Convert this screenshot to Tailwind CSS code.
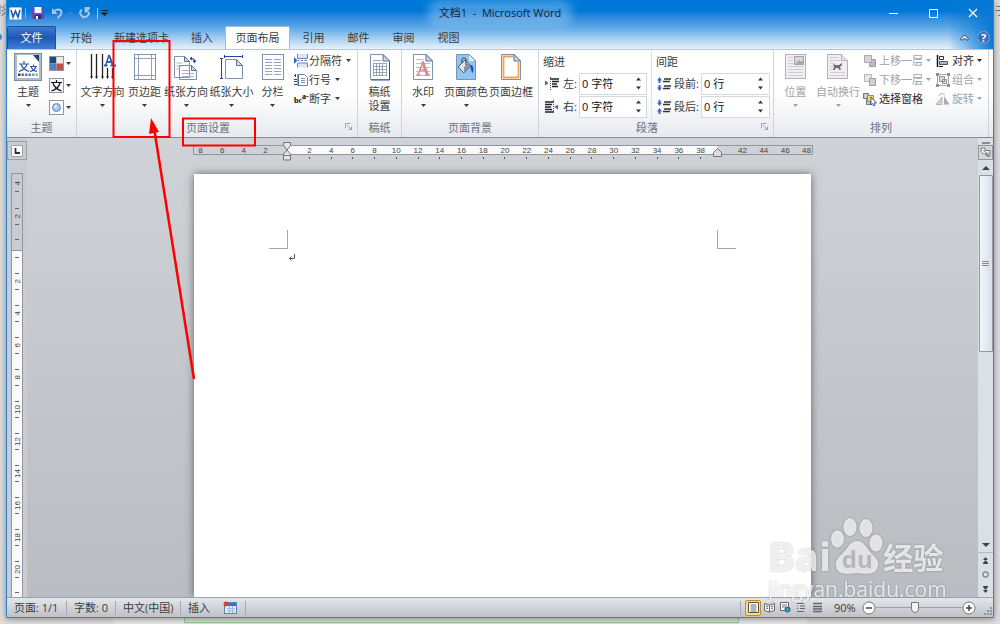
<!DOCTYPE html>
<html lang="zh-CN">
	<head>
		<meta charset="UTF-8" />
		<meta name="viewport" content="width=device-width, initial-scale=1.0" />
		<title>文档1 - Microsoft Word</title>
		<script src="https://cdn.jsdelivr.net/npm/@tailwindcss/browser@4"></script>
	</head>
	<body class="relative h-screen overflow-hidden bg-[#dcdcdc] font-['Open_Sans','Noto_Sans_CJK_SC',sans-serif] text-[11px] leading-[14px] text-[#3b3b3b]">
		<!-- Shared symbols -->
		<svg class="hidden">
			<defs>
				<linearGradient id="paper" x1="0" y1="0" x2="1" y2="1">
					<stop offset="0" stop-color="#fff" />
					<stop offset="1" stop-color="#cbdaee" />
				</linearGradient>
			</defs>
			<symbol id="arrow" viewBox="0 0 5 3"><path d="M0 0h5L2.500 3z" fill="currentColor" /></symbol>
			<symbol id="sheet" viewBox="0 0 22 28">
				<path d="M1.500 1.500h12.500l6.500 6.500v18.500h-19z" fill="url(#paper)" stroke="#7f93ad" />
				<path d="M14 1.500v6.500h6.500z" fill="#c9d8ea" stroke="#5b7391" />
			</symbol>
			<symbol id="launcher" viewBox="0 0 8 8"><path d="M.5 6V.5H6M3 3l4 4M7.500 4v3.500H4" fill="none" stroke="#8b929c" /></symbol>
		</svg>

		<!-- Window behind -->
		<div class="absolute inset-x-0 bottom-0 flex h-[6px] pl-[114px]">
			<div class="w-[70px] bg-[#e6e6e6]"></div>
			<div class="h-[5px] w-[555px] border border-t-0 border-[#9cc79a] bg-[#d4e3d0]"></div>
			<div class="w-[68px] bg-[#e6e6e6]"></div>
		</div>
		<div class="absolute top-[4px] right-0 w-[5px] overflow-hidden text-[#555]">子</div>
		<div class="absolute top-[4px] left-0 flex w-[6px] justify-end overflow-hidden text-[#777]">彩</div>
		<div class="absolute top-[34px] -left-[3px] h-[6px] w-[5px] rounded-full border-2 border-[#4a8be0]"></div>

		<div class="relative mx-[6px] flex h-[calc(100vh-6px)] flex-col border border-t-0 border-[#2a86d3] bg-[#c9cdd2] shadow-[0_1px_6px_rgba(0,0,0,0.4)]">
			<header class="relative bg-linear-to-b from-[#0078d7] from-24% via-[#5aa8e6] via-56% to-[#e8f2fb]">
				<div class="absolute inset-y-0 right-0 w-[45px] bg-linear-to-r from-transparent to-[#0a78d2]"></div>
				<!-- Title bar -->
				<div class="relative flex h-[26px] items-center">
					<div class="flex flex-1 items-center">
						<svg class="ml-[2px] size-[13px]" viewBox="0 0 13 13">
							<rect x=".5" y=".5" width="12" height="12" rx="1" fill="#fff" stroke="#9cc5ea" />
							<path d="M2 3l2 7 2.500-6 2.500 6 2-7" fill="none" stroke="#1d5cae" stroke-width="1.600" />
						</svg>
						<span class="ml-[3px] h-[11px] w-px bg-[#7ab2e4]"></span>
						<button class="ml-[6px]" aria-label="保存">
							<svg class="size-[12px]" viewBox="0 0 12 12">
								<path d="M0 0h12v12H1L0 11z" fill="#5a4bb5" />
								<path d="M2.500 0h7v6h-7z" fill="#f3f3fb" />
								<path d="M3 8h6v4H3z" fill="#2d2670" />
								<path d="M4 9h2v3H4z" fill="#fff" />
							</svg>
						</button>
						<button class="ml-[8px]" aria-label="撤消">
							<svg class="h-[12px] w-[11px]" viewBox="0 0 11 12">
								<path d="M2 4.500C5 1.500 9.500 2 9.500 5.500c0 2.500-2 3.500-4 5.500" fill="none" stroke="#a9c6e6" stroke-width="2" />
								<path d="M0 1v6h5.500z" fill="#a9c6e6" />
							</svg>
						</button>
						<svg class="ml-[5px] h-[3px] w-[5px] text-[#4a7fb5]"><use href="#arrow" /></svg>
						<button class="ml-[6px]" aria-label="重复">
							<svg class="size-[12px]" viewBox="0 0 12 12">
								<path d="M3 2.500A4.200 4.200 0 1 0 9.500 4.500" fill="none" stroke="#a9c6e6" stroke-width="2" />
								<path d="M5.500 5.500V0H11v1.500L8 5.500z" fill="#a9c6e6" />
							</svg>
						</button>
						<span class="ml-[6px] h-[11px] w-px bg-[#9fc8ee]"></span>
						<button class="ml-[3px]" aria-label="自定义快速访问工具栏">
							<svg class="h-[6px] w-[7px]" viewBox="0 0 7 6"><path d="M0 0h7v1H0zM0 2.500h7L3.500 6z" fill="#0d2238" /></svg>
						</button>
					</div>
					<h1 class="rounded-full bg-white/25 px-[6px] whitespace-pre text-[#10243a] shadow-[0_0_8px_6px_rgba(255,255,255,0.25)]">文档1  -  Microsoft Word</h1>
					<div class="flex flex-1 justify-end text-white">
						<button class="mr-[30px]" aria-label="最小化"><svg class="size-[10px]" viewBox="0 0 10 10"><path d="M1 5.500h9" stroke="currentColor" /></svg></button>
						<button class="mr-[30px]" aria-label="最大化"><svg class="size-[10px]" viewBox="0 0 10 10"><path d="M1.500 1.500h8v8h-8z" fill="none" stroke="currentColor" /></svg></button>
						<button class="mr-[15px]" aria-label="关闭"><svg class="size-[10px]" viewBox="0 0 10 10"><path d="M1 1l8 8M9 1l-8 8" stroke="currentColor" stroke-width="1.200" /></svg></button>
					</div>
				</div>

				<!-- Tabs -->
				<nav class="relative flex h-[23px] items-stretch">
					<button class="w-[49px] rounded-t-[2px] border border-b-0 border-[#1d4f9f] bg-linear-to-b from-[#3d7bd0] via-[#1f57b2] to-[#3f7fd8] text-white">文件</button>
					<button class="ml-[2px] w-[46px]">开始</button>
					<button class="w-[75px] whitespace-nowrap">新建选项卡</button>
					<button class="w-[46px]">插入</button>
					<button class="w-[65px] rounded-t-[2px] border border-b-0 border-[#a7b9cc] bg-white">页面布局</button>
					<button class="ml-px w-[45px]">引用</button>
					<button class="w-[45px]">邮件</button>
					<button class="w-[45px]">审阅</button>
					<button class="w-[45px]">视图</button>
					<div class="ml-auto flex items-center gap-[8px] pr-[3px]">
						<button aria-label="功能区最小化"><svg class="h-[7px] w-[9px]" viewBox="0 0 9 7"><path d="M1 4.500L4.500 1 8 4.500v1.500H6.500l-2-2-2 2H1z" fill="#fff" stroke="#33414f" /></svg></button>
						<button aria-label="帮助" class="size-[13px] rounded-full border border-[#7fa3da] bg-[#3a6cc0] text-[11px] leading-[11px] font-bold text-white">?</button>
					</div>
				</nav>
			</header>

			<!-- Ribbon -->
			<section class="flex h-[89px] shrink-0 border-t border-b border-t-[#b9c6d4] border-b-[#868b91] bg-linear-to-b from-white from-50% to-[#e6e9ee]">
				<div class="flex w-[70px] flex-col border-r border-[#cfd4da]">
					<div class="flex flex-1">
						<button class="flex w-[42px] flex-col items-center pt-[3px]">
							<svg class="mb-[4px] size-[28px]" viewBox="0 0 28 28">
								<rect x=".5" y=".5" width="27" height="27" fill="#aebccc" stroke="#7d8da0" />
								<path d="M3 2h17l5 5v18H3z" fill="#fff" />
								<path d="M19 2h6v7z" fill="#1f3f77" />
								<path d="M5 11h10M10 8v3M7 11c1 4 4 6 8 7.500M13 11c-1 4-4 6-8 7.500M16 13.500h7M19.500 11.500v2M17 13.500c1 3 3 4.500 6 5M22 13.500c-1 3-3 4.500-6 5" fill="none" stroke="#2e5c9a" stroke-width="1.100" />
								<path d="M4 20.500h2.500v2.500H4z" fill="#27477d" /><path d="M7.500 20.500H10v2.500H7.500z" fill="#c0504d" /><path d="M11 20.500h2.500v2.500H11z" fill="#4f81bd" /><path d="M14.500 20.500H17v2.500h-2.500z" fill="#8064a2" /><path d="M18 20.500h2.500v2.500H18z" fill="#4bacc6" /><path d="M21.500 20.500H24v2.500h-2.500z" fill="#f79646" />
							</svg>
							<span>主题</span>
							<svg class="mt-[5px] h-[3px] w-[5px]"><use href="#arrow" /></svg>
						</button>
						<div class="flex flex-col gap-[7px] pt-[6px]">
							<button class="flex items-center gap-[2px]" aria-label="主题颜色">
								<svg class="size-[15px]" viewBox="0 0 15 15"><rect x=".5" y=".5" width="14" height="14" fill="#fff" stroke="#8c98a6" /><path d="M1 1h6.500v6.500H1z" fill="#1f497d" /><path d="M7.500 1H14v6.500H7.500z" fill="#eeece1" /><path d="M1 7.500h6.500V14H1z" fill="#4f81bd" /><path d="M7.500 7.500H14V14H7.500z" fill="#c0504d" /></svg>
								<svg class="h-[3px] w-[5px]"><use href="#arrow" /></svg>
							</button>
							<button class="flex items-center gap-[2px]" aria-label="主题字体">
								<svg class="size-[15px]" viewBox="0 0 15 15"><rect x=".5" y=".5" width="14" height="14" fill="#f5f7fa" stroke="#8c98a6" /><path d="M2 4.500h11M7.500 2v2.500M4 5c1 4 4 6.500 8.500 8M11 5c-1 4-4 6.500-8.500 8" fill="none" stroke="#111" stroke-width="1.200" /></svg>
								<svg class="h-[3px] w-[5px]"><use href="#arrow" /></svg>
							</button>
							<button class="flex items-center gap-[2px]" aria-label="主题效果">
								<svg class="size-[15px]" viewBox="0 0 15 15"><rect x=".5" y=".5" width="14" height="14" fill="#fff" stroke="#8c98a6" /><circle cx="7.500" cy="7.500" r="4" fill="#a9c6f2" stroke="#5e86c9" /><circle cx="6.500" cy="6.500" r="1.500" fill="#e3eefc" /></svg>
								<svg class="h-[3px] w-[5px]"><use href="#arrow" /></svg>
							</button>
						</div>
					</div>
					<div class="h-[16px] text-center text-[#6b727c]">主题</div>
				</div>

				<div class="flex w-[281px] flex-col border-r border-[#cfd4da]">
					<div class="flex flex-1 pl-[3px] whitespace-nowrap">
						<button class="flex w-[45px] flex-col items-center pt-[3px]">
							<svg class="mb-[4px] h-[28px] w-[26px]" viewBox="0 0 26 28">
								<path d="M1.500 1v23M6.500 1v23M12.500 1v23M17.500 15v9M22.500 15v9" stroke="#222" stroke-width="1.300" />
								<path d="M0 23.500h3L1.500 26zM5 23.500h3L6.500 26zM11 23.500h3L12.500 26zM16 23.500h3L17.500 26zM21 23.500h3L22.500 26z" fill="#222" />
								<path d="M15.500 12.500L19 2M19 2l4 10.500" fill="none" stroke="#2f62ae" stroke-width="1.500" />
								<path d="M19 2l4 10.500M17 9h5M14 12.500h3.500M20.500 12.500H26" fill="none" stroke="#2f62ae" stroke-width="1.800" />
							</svg>
							<span>文字方向</span>
							<svg class="mt-[5px] h-[3px] w-[5px]"><use href="#arrow" /></svg>
						</button>
						<button class="flex w-[39px] flex-col items-center pt-[3px]">
							<svg class="mb-[4px] h-[28px] w-[22px]" viewBox="0 0 22 28">
								<rect x=".5" y="1.500" width="21" height="25" fill="url(#paper)" stroke="#7f93ad" />
								<path d="M4.500 2v24M17.500 2v24M1 5.500h20M1 22.500h20" stroke="#8fa2c2" />
							</svg>
							<span>页边距</span>
							<svg class="mt-[5px] h-[3px] w-[5px]"><use href="#arrow" /></svg>
						</button>
						<button class="flex w-[44px] flex-col items-center pt-[3px]">
							<svg class="mb-[4px] h-[28px] w-[26px]" viewBox="0 0 26 28">
								<path d="M1.500 3.500h10l5 5v16h-15z" fill="url(#paper)" stroke="#7f93ad" /><path d="M11.500 3.500v5h5z" fill="#c9d8ea" stroke="#5b7391" />
								<path d="M3.500 10h6M3.500 13h6M3.500 16h3" stroke="#9fb2cb" />
								<path d="M6.500 12.500h12l5 5v9h-17z" fill="url(#paper)" stroke="#7f93ad" /><path d="M18.500 12.500v5h5z" fill="#c9d8ea" stroke="#5b7391" />
								<path d="M9 17.500h7M9 20.500h12M9 23.500h12" stroke="#9fb2cb" />
								<path d="M18.500 5.500c2 0 3 1 3 3" fill="none" stroke="#24468c" stroke-width="1.200" /><path d="M19.500 7.500h4L21.500 10.500zM19 3.500v4L16.500 5.500z" fill="#24468c" />
							</svg>
							<span>纸张方向</span>
							<svg class="mt-[5px] h-[3px] w-[5px]"><use href="#arrow" /></svg>
						</button>
						<button class="flex w-[47px] flex-col items-center pt-[3px]">
							<svg class="mb-[4px] h-[28px] w-[24px]" viewBox="0 0 24 28">
								<path d="M5.500 6.500h11l6 6v13h-17z" fill="url(#paper)" stroke="#7f93ad" /><path d="M16.500 6.500v6h6z" fill="#c9d8ea" stroke="#5b7391" />
								<path d="M4.500 3.500h18M1.500 6v20M4.500 2v3M22.500 2v3M0 5.500h3M0 25.500h3" fill="none" stroke="#2c3e9c" />
							</svg>
							<span>纸张大小</span>
							<svg class="mt-[5px] h-[3px] w-[5px]"><use href="#arrow" /></svg>
						</button>
						<button class="flex w-[35px] flex-col items-center pt-[3px]">
							<svg class="mb-[4px] h-[28px] w-[22px]" viewBox="0 0 22 28">
								<rect x=".5" y="1.500" width="21" height="25" fill="url(#paper)" stroke="#7f93ad" />
								<path d="M3 6.500h7M3 9.500h7M3 12.500h7M3 15.500h7M3 18.500h7M3 21.500h7M12 6.500h7M12 9.500h7M12 12.500h7M12 15.500h7M12 18.500h7M12 21.500h7" stroke="#8ea6c8" />
							</svg>
							<span>分栏</span>
							<svg class="mt-[5px] h-[3px] w-[5px]"><use href="#arrow" /></svg>
						</button>
						<div class="flex flex-col pt-px pl-[4px]">
							<button class="flex h-[19px] items-center gap-px">
								<svg class="h-[14px] w-[14px]" viewBox="0 0 14 14"><path d="M3.500 0v4.500h10V0M3.500 13.500v-4.500h10v4.500" fill="#dbe6f4" stroke="#6c87ad" /><path d="M0 3.500v6l3-3zM4 6.500h1.500M7 6.500h2M10.500 6.500H13" fill="#2d62b3" stroke="#2d62b3" stroke-width=".8" /></svg>
								<span>分隔符</span>
								<svg class="ml-[3px] h-[3px] w-[5px]"><use href="#arrow" /></svg>
							</button>
							<button class="flex h-[19px] items-center gap-px">
								<svg class="h-[14px] w-[14px]" viewBox="0 0 14 14"><path d="M4.500 1.500h6l3 3v8h-9z" fill="url(#paper)" stroke="#6c87ad" /><path d="M7 5.500h4M7 7.500h4M7 9.500h4" stroke="#7d95b8" /><path d="M0 2.500h2M1.500 1v3M0 6.500h3M0 8.500h3M0 11.500h3M4 1v12" stroke="#2b4d85" /></svg>
								<span>行号</span>
								<svg class="ml-[3px] h-[3px] w-[5px]"><use href="#arrow" /></svg>
							</button>
							<button class="flex h-[19px] items-center gap-px">
								<span class="flex w-[14px] font-['Liberation_Serif',serif] text-[8px] leading-[8px] font-bold text-black"><span class="pt-[4px]">bc</span><span>a-</span></span>
								<span>断字</span>
								<svg class="ml-[3px] h-[3px] w-[5px]"><use href="#arrow" /></svg>
							</button>
						</div>
					</div>
					<div class="flex h-[16px] text-[#6b727c]">
						<span class="flex-1 text-center">页面设置</span>
						<button class="w-[18px] pb-[6px] pl-[6px]" aria-label="页面设置对话框"><svg class="size-[7px]"><use href="#launcher" /></svg></button>
					</div>
				</div>

				<div class="flex w-[44px] flex-col border-r border-[#cfd4da]">
					<button class="flex flex-1 flex-col items-center pt-[3px]">
						<svg class="mb-[4px] h-[28px] w-[22px]" viewBox="0 0 22 28">
							<use href="#sheet" />
							<path d="M4 10.500h14M4 13.500h14M4 16.500h14M4 19.500h14M4 22.500h14M4.500 10v13M7.500 10v13M10.500 10v13M13.500 10v13M17.500 10v13M4 7.500h8" stroke="#8893a3" stroke-width=".8" />
							<path d="M20.500 9v18H2" fill="none" stroke="#2f5597" />
						</svg>
						<span class="w-[22px]">稿纸设置</span>
					</button>
					<div class="h-[16px] text-center text-[#6b727c]">稿纸</div>
				</div>

				<div class="flex w-[137px] flex-col border-r border-[#cfd4da]">
					<div class="flex flex-1 whitespace-nowrap">
						<button class="flex w-[42px] flex-col items-center pt-[3px]">
							<svg class="mb-[4px] h-[28px] w-[22px]" viewBox="0 0 22 28">
								<use href="#sheet" />
								<path d="M4 6.500h8M4 10.500h14M4 14.500h14M4 18.500h14M4 22.500h14" stroke="#b5c2d3" />
								<path d="M6 21.500L11 9M8 17h6.500M4.500 22h4M13 22h5" fill="none" stroke="#d98a86" stroke-width="1.400" />
								<path d="M10.500 8.500l5 13.500" stroke="#d98a86" stroke-width="2.800" />
							</svg>
							<span>水印</span>
							<svg class="mt-[5px] h-[3px] w-[5px]"><use href="#arrow" /></svg>
						</button>
						<button class="flex w-[44px] flex-col items-center pt-[3px]">
							<svg class="mb-[4px] h-[28px] w-[22px]" viewBox="0 0 22 28">
								<use href="#sheet" />
								<path d="M2 2h12v6h6v18H2z" fill="#8ec5f5" /><path d="M14 2v6h6z" fill="#e4effa" />
								<path d="M3 14l7-7 6 6-7 7z" fill="#dfe5ec" stroke="#4d5a68" /><path d="M9 14l4-4 3 3-7 7z" fill="#8794a3" /><path d="M7 10V6.500c0-2 4-2 4 0V12" fill="none" stroke="#333" />
								<path d="M15 12c3 0 4 2 3 8-2-1-2-4-3-8z" fill="#1f4fa8" />
							</svg>
							<span>页面颜色</span>
							<svg class="mt-[5px] h-[3px] w-[5px]"><use href="#arrow" /></svg>
						</button>
						<button class="flex w-[46px] flex-col items-center pt-[3px]">
							<svg class="mb-[4px] h-[28px] w-[22px]" viewBox="0 0 22 28">
								<use href="#sheet" />
								<path d="M13.500 3.500h-10v21h15V9" fill="none" stroke="#eda25a" stroke-width="1.800" />
							</svg>
							<span>页面边框</span>
						</button>
					</div>
					<div class="h-[16px] text-center text-[#6b727c]">页面背景</div>
				</div>

				<div class="flex w-[235px] flex-col border-r border-[#cfd4da]">
					<div class="flex flex-1 pl-[4px]">
						<div class="w-[109px] border-r border-[#dfe3e8] pt-[5px]">
							<div class="mb-[3px]">缩进</div>
							<div class="flex h-[23px] items-center">
								<svg class="ml-[2px] h-[14px] w-[15px]" viewBox="0 0 15 14"><path d="M5 2h9M7 4.500h7M7 7h5M7 9.500h6" stroke="#222" stroke-width="1.500" /><path d="M5.500 0v14" stroke="#555" stroke-dasharray="1 1" /><path d="M0 3.500v5L3.500 6z" fill="#3a66c4" /></svg>
								<label for="indent-left" class="w-[19px] pl-[3px]">左:</label>
								<div class="flex h-[22px] w-[68px] shrink-0 items-center border border-[#d5d9de] bg-white">
									<input id="indent-left" class="w-[50px] pl-[2px] text-[#111] outline-none" value="0 字符" />
									<svg class="ml-[6px] h-[13px] w-[5px]" viewBox="0 0 5 13"><path d="M0 3.500h5L2.500.5zM0 9.500h5L2.500 12.500z" fill="#333" /></svg>
								</div>
							</div>
							<div class="flex h-[23px] items-center">
								<svg class="ml-[2px] h-[14px] w-[15px]" viewBox="0 0 15 14"><path d="M0 2h9M0 4.500h7M0 7h6M0 9.500h7M0 12h9" stroke="#222" stroke-width="1.500" /><path d="M8.500 0v14" stroke="#555" stroke-dasharray="1 1" /><path d="M9.500 7L13 4.500v5z" fill="#3a66c4" /></svg>
								<label for="indent-right" class="w-[19px] pl-[3px]">右:</label>
								<div class="flex h-[22px] w-[68px] shrink-0 items-center border border-[#d5d9de] bg-white">
									<input id="indent-right" class="w-[50px] pl-[2px] text-[#111] outline-none" value="0 字符" />
									<svg class="ml-[6px] h-[13px] w-[5px]" viewBox="0 0 5 13"><path d="M0 3.500h5L2.500.5zM0 9.500h5L2.500 12.500z" fill="#333" /></svg>
								</div>
							</div>
						</div>
						<div class="pt-[5px] pl-[4px]">
							<div class="mb-[3px]">间距</div>
							<div class="flex h-[23px] items-center">
								<svg class="ml-px h-[14px] w-[14px]" viewBox="0 0 14 14"><path d="M7 2h7M6 4.500h7M7 9h7M6 11.500h7" stroke="#333" stroke-width="1.400" /><path d="M0 3.500L2.500 0 5 3.500H3.500V6h-2V3.500zM0 10.500L2.500 14 5 10.500H3.500V8h-2v2.500z" fill="#3a66c4" /></svg>
								<label for="space-before" class="w-[30px] pl-[3px] whitespace-nowrap">段前:</label>
								<div class="flex h-[22px] w-[69px] shrink-0 items-center border border-[#d5d9de] bg-white">
									<input id="space-before" class="w-[50px] pl-[2px] text-[#111] outline-none" value="0 行" />
									<svg class="ml-[6px] h-[13px] w-[5px]" viewBox="0 0 5 13"><path d="M0 3.500h5L2.500.5zM0 9.500h5L2.500 12.500z" fill="#333" /></svg>
								</div>
							</div>
							<div class="flex h-[23px] items-center">
								<svg class="ml-px h-[14px] w-[14px]" viewBox="0 0 14 14"><path d="M7 2h7M6 4.500h7M7 9h7M6 11.500h7" stroke="#333" stroke-width="1.400" /><path d="M0 2.500L2.500 6 5 2.500H3.500V0h-2v2.500zM0 11.500L2.500 8 5 11.500H3.500V14h-2v-2.500z" fill="#3a66c4" /></svg>
								<label for="space-after" class="w-[30px] pl-[3px] whitespace-nowrap">段后:</label>
								<div class="flex h-[22px] w-[69px] shrink-0 items-center border border-[#d5d9de] bg-white">
									<input id="space-after" class="w-[50px] pl-[2px] text-[#111] outline-none" value="0 行" />
									<svg class="ml-[6px] h-[13px] w-[5px]" viewBox="0 0 5 13"><path d="M0 3.500h5L2.500.5zM0 9.500h5L2.500 12.500z" fill="#333" /></svg>
								</div>
							</div>
						</div>
					</div>
					<div class="flex h-[16px] text-[#6b727c]">
						<span class="flex-1 text-center">段落</span>
						<button class="w-[18px] pb-[6px] pl-[6px]" aria-label="段落对话框"><svg class="size-[7px]"><use href="#launcher" /></svg></button>
					</div>
				</div>

				<div class="flex w-[215px] flex-col border-r border-[#cfd4da]">
					<div class="flex flex-1 whitespace-nowrap text-[#a0a3a8]">
						<button class="flex w-[43px] flex-col items-center pt-[3px]" disabled>
							<svg class="mb-[4px] h-[28px] w-[22px]" viewBox="0 0 22 28">
								<rect x=".5" y="1.500" width="20" height="24" fill="#f0eef2" stroke="#b3b1b8" />
								<path d="M3 4.500h5M3 7.500h5M3 10.500h5M3 13.500h15M3 16.500h15M3 19.500h15M3 22.500h15" stroke="#cfcdd4" />
								<rect x="9.500" y="3.500" width="9" height="8" fill="#d8d6dc" stroke="#a6a4ab" /><path d="M10 11l4-4 2 2 2-2v4z" fill="#aaa8af" />
							</svg>
							<span>位置</span>
							<svg class="mt-[5px] h-[3px] w-[5px]"><use href="#arrow" /></svg>
						</button>
						<button class="flex w-[42px] flex-col items-center pt-[3px]" disabled>
							<svg class="mb-[4px] h-[28px] w-[22px]" viewBox="0 0 22 28">
								<path d="M.5 1.500h14l6 6v18H.5z" fill="#f0eef2" stroke="#b3b1b8" /><path d="M14.500 1.500v6h6" fill="#e2e0e6" stroke="#b3b1b8" />
								<path d="M3 4.500h9M3 7.500h10M3 10.500h3M3 13.500h3M3 16.500h3M3 19.500h15M3 22.500h15" stroke="#cfcdd4" />
								<path d="M6 10l2 2h4l3-2v2l-2 2 1 3h-1.500L11 15H9l-1.500 2H6l1-3z" fill="#6f6d73" />
							</svg>
							<span>自动换行</span>
							<svg class="mt-[5px] h-[3px] w-[5px]"><use href="#arrow" /></svg>
						</button>
						<div class="flex flex-col pt-px pl-[4px]">
							<button class="flex h-[19px] items-center gap-[2px]" disabled>
								<svg class="size-[14px]" viewBox="0 0 14 14"><path d="M6.500 5.500h6v7h-6z" fill="#bbb9bf" stroke="#a09ea5" /><path d="M1.500 1.500h7v7h-7z" fill="#d5d3d9" stroke="#aaa8af" /></svg>
								<span>上移一层</span>
								<svg class="ml-px h-[3px] w-[5px]"><use href="#arrow" /></svg>
							</button>
							<button class="flex h-[19px] items-center gap-[2px]" disabled>
								<svg class="size-[14px]" viewBox="0 0 14 14"><path d="M1.500 1.500h7v7h-7z" fill="#e8e6ec" stroke="#b5b3ba" /><path d="M6.500 5.500h6v7h-6z" fill="#d0ced4" stroke="#a09ea5" /></svg>
								<span>下移一层</span>
								<svg class="ml-px h-[3px] w-[5px]"><use href="#arrow" /></svg>
							</button>
							<button class="flex h-[19px] items-center gap-[2px] text-[#2b2b2b]">
								<svg class="size-[14px]" viewBox="0 0 14 14"><path d="M.5 1.500h5v5h-5zM3.500 7.500h4v5h-4z" fill="#c6ccd4" stroke="#6e7885" /><path d="M4.500 3.500h6v6h-6z" fill="#f6d36b" stroke="#b58c2b" /><path d="M8 5l5.500 6h-2.500l1 2.500-1.500.5-1-2.500L8 13z" fill="#fff" stroke="#2f4f8c" stroke-width=".9" /></svg>
								<span>选择窗格</span>
							</button>
						</div>
						<div class="flex flex-col pt-px pl-[5px]">
							<button class="flex h-[19px] items-center gap-[2px] text-[#2b2b2b]">
								<svg class="size-[14px]" viewBox="0 0 14 14"><path d="M1.500 1v12" stroke="#111" stroke-width="1.500" /><path d="M3.500 2.500h4v3h-4z" fill="#fff" stroke="#333" /><path d="M3.500 7.500h8v3h-8z" fill="#a9b7c9" stroke="#556" /><path d="M3 12.500h4" stroke="#111" /></svg>
								<span>对齐</span>
								<svg class="ml-px h-[3px] w-[5px]"><use href="#arrow" /></svg>
							</button>
							<button class="flex h-[19px] items-center gap-[2px]" disabled>
								<svg class="size-[14px]" viewBox="0 0 14 14"><path d="M1.500 1.500h11v11h-11z" fill="none" stroke="#a5a5a9" /><path d="M3.500 3.500h5v5h-5zM6.500 6.500h4v4h-4z" fill="#dddce0" stroke="#8e8e93" /><path d="M0 0h3v3H0zM11 0h3v3h-3zM0 11h3v3H0zM11 11h3v3h-3z" fill="#8e8e93" /></svg>
								<span>组合</span>
								<svg class="ml-px h-[3px] w-[5px]"><use href="#arrow" /></svg>
							</button>
							<button class="flex h-[19px] items-center gap-[2px]" disabled>
								<svg class="size-[14px]" viewBox="0 0 14 14"><path d="M0 12.500L6 5v7.500z" fill="#d4d4d8" stroke="#b5b5ba" /><path d="M8 4l5.500 8.500H8z" fill="#a9a9ae" /><path d="M3 4c1-3 4-3 6-1" fill="none" stroke="#a9a9ae" /></svg>
								<span>旋转</span>
								<svg class="ml-px h-[3px] w-[5px]"><use href="#arrow" /></svg>
							</button>
						</div>
					</div>
					<div class="h-[16px] text-center text-[#6b727c]">排列</div>
				</div>
			</section>

			<!-- Document area -->
			<main class="flex min-h-0 flex-1 bg-linear-to-b from-[#cfd2d7] to-[#b9bcc1] font-['Liberation_Sans',sans-serif] text-[8px] leading-[9px] text-[#444]">
				<div class="flex w-[20px] flex-col bg-[#c9cdd3]">
					<button class="mt-[3px] mb-[13px] flex h-[19px] shrink-0 items-center justify-center border border-[#9a9fa6]" aria-label="制表符">
						<svg class="size-[12px]" viewBox="0 0 12 12"><path d="M0 0h12v12H0z" fill="#fff" /><path d="M.5.5h11v11H.5z" fill="none" stroke="#9a9fa6" /><path d="M4.500 3v5H9" fill="none" stroke="#333" stroke-width="1.800" /></svg>
					</button>
					<div id="verticalRuler" class="ml-[4px] flex min-h-0 w-[12px] flex-1 flex-col overflow-hidden border border-b-0 border-[#93979d] bg-[#fafafa]">
						<div class="flex h-[77px] shrink-0 flex-col items-center border-b border-[#93979d] bg-[#c9cdd3]"></div>
						<div class="mt-[6px] flex min-h-0 flex-col items-center"></div>
					</div>
				</div>
				<div class="flex min-w-0 flex-1 flex-col items-center overflow-hidden">
					<div class="relative mt-[7px] mb-[19px] flex h-[10px] w-[620px] shrink-0 border border-[#93979d]">
						<div id="rulerLeft" class="flex w-[93px] justify-between pr-[16px] pl-[2px]"></div>
						<div id="rulerBody" class="flex flex-1 bg-[#fafafa] pr-[5px] pl-[12px]"></div>
						<div id="rulerRight" class="flex w-[95px] justify-between pl-[21px]"></div>
						<svg class="absolute -top-[4px] left-[88px] h-[19px] w-[10px]" viewBox="0 0 10 19"><path d="M1.500.5h7v3L5 8 1.500 3.500zM5 8l3.500 4v6h-7v-6zM1.500 13.500h7" fill="#e4e4e4" stroke="#777" /></svg>
						<svg class="absolute top-[2px] left-[519px] h-[9px] w-[9px]" viewBox="0 0 9 9"><path d="M4.500.5L8.500 4.500v4h-8v-4z" fill="#ddd" stroke="#777" /></svg>
					</div>
					<article class="w-[617px] flex-1 bg-white px-[75px] pt-[56px] shadow-[0_0_8px_rgba(0,0,0,0.5)]">
						<div class="flex justify-between">
							<div class="size-[19px] border-r border-b border-[#a6a6a6]"></div>
							<div class="size-[19px] border-b border-l border-[#a6a6a6]"></div>
						</div>
						<svg class="mt-[5px] ml-[19px] h-[8px] w-[8px]" viewBox="0 0 8 8"><path d="M6.500 0v4.500H1.500M3.500 2.500l-2 2 2 2" fill="none" stroke="#555" /></svg>
					</article>
				</div>
				<div class="flex w-[15px] flex-col items-center bg-[#dbdfe7]">
					<span class="mt-[4px] h-[2px] w-[8px] shrink-0 bg-[#888c92]"></span>
					<button class="mt-px flex h-[15px] w-full shrink-0 items-center justify-center border border-[#93979d] bg-[#d3d7dd]" aria-label="标尺">
						<svg class="size-[11px]" viewBox="0 0 11 11"><path d="M1 1h4v2.500h5v5.500H6.500V7H3.500L1 4.500z" fill="#f4eef0" stroke="#777" /><path d="M3.500 3.500l2 2M6 5l3 5M9 5.500L6.500 9" stroke="#777" /></svg>
					</button>
					<button class="flex h-[15px] shrink-0 items-center" aria-label="向上滚动"><svg class="h-[4px] w-[8px]" viewBox="0 0 8 4"><path d="M0 4h8L4 0z" fill="#444" /></svg></button>
					<div class="flex h-[177px] w-[14px] shrink-0 flex-col items-center justify-center gap-px rounded-[1px] border border-[#93979d] bg-linear-to-r from-[#f3f5f9] to-[#dadfe8]">
						<span class="h-px w-[7px] bg-[#888]"></span><span class="h-px w-[7px] bg-[#888]"></span><span class="h-px w-[7px] bg-[#888]"></span>
					</div>
					<div class="flex-1"></div>
					<button class="flex h-[15px] w-full shrink-0 items-center justify-center border-b border-[#b4bac4]" aria-label="向下滚动"><svg class="h-[4px] w-[8px]" viewBox="0 0 8 4"><path d="M0 0h8L4 4z" fill="#444" /></svg></button>
					<button class="flex h-[14px] shrink-0 items-center" aria-label="前一页"><svg class="h-[7px] w-[5px]" viewBox="0 0 5 7"><path d="M0 3h5L2.500 0zM0 6h5L2.500 3zM0 6h5v1H0z" fill="#444" /></svg></button>
					<button class="flex h-[15px] shrink-0 items-center" aria-label="选择浏览对象"><svg class="size-[7px]" viewBox="0 0 7 7"><circle cx="3.500" cy="3.500" r="2.700" fill="none" stroke="#555" /></svg></button>
					<button class="flex h-[15px] shrink-0 items-center" aria-label="下一页"><svg class="h-[7px] w-[5px]" viewBox="0 0 5 7"><path d="M0 0h5v1H0zM0 1h5L2.500 4zM0 4h5L2.500 7z" fill="#444" /></svg></button>
				</div>
			</main>

			<!-- Status bar -->
			<footer class="flex h-[20px] shrink-0 items-center border-t border-[#9ba1ab] bg-linear-to-b from-[#e3e6ea] to-[#bec2c8] whitespace-nowrap">
				<span class="w-[60px] border-r border-[#a3a8af] pl-[7px]">页面: 1/1</span>
				<span class="w-[49px] border-r border-[#a3a8af] pl-[7px]">字数: 0</span>
				<span class="w-[65px] border-r border-[#a3a8af] pl-[7px]">中文(中国)</span>
				<span class="pl-[7px]">插入</span>
				<svg class="ml-[13px] h-[13px] w-[14px]" viewBox="0 0 14 13"><rect x="1.500" y="1.500" width="12" height="11" fill="#e6edf8" stroke="#5f82c0" /><path d="M2 2h11v3H2z" fill="#3f6cc4" /><path d="M4 7.500h8M4 10h8M6.500 5v7M9.500 5v7" stroke="#a5b8da" /><circle cx="3" cy="3" r="2.500" fill="#d8452e" /></svg>
				<span class="ml-[8px] h-[14px] w-px bg-[#a3a8af]"></span>
				<div class="ml-auto flex items-center">
					<span class="mr-[4px] h-[14px] w-px bg-[#a3a8af]"></span>
					<button class="flex size-[16px] items-center justify-center rounded-[2px] border border-[#c88a1c] bg-[#fbdc7c]" aria-label="页面视图"><svg class="size-[11px]" viewBox="0 0 11 11"><path d="M.5.5h10v10H.5z" fill="#fff" stroke="#555" /><path d="M2.500 3h6M2.500 5h6M2.500 7h6M2.500 9h6" stroke="#666" /></svg></button>
					<button class="ml-[3px]" aria-label="阅读版式视图"><svg class="size-[11px]" viewBox="0 0 11 11"><path d="M.5 1.500l5 1.500 5-1.500v7l-5 1.500-5-1.500zM5.500 3v7" fill="#f5f5f5" stroke="#666" /><path d="M2 4l2 .5M2 6l2 .5M7 4.500L9 4M7 6.500L9 6" stroke="#666" /></svg></button>
					<button class="ml-[5px]" aria-label="Web 版式视图"><svg class="size-[11px]" viewBox="0 0 11 11"><path d="M.5.5h8v8h-8z" fill="#fff" stroke="#666" /><path d="M2 3h5M2 5h4" stroke="#777" /><circle cx="7.500" cy="7.500" r="3" fill="#2b6fb5" /><path d="M6 7l2-1 1 2-2 1z" fill="#5ab264" /></svg></button>
					<button class="ml-[5px]" aria-label="大纲视图"><svg class="size-[11px]" viewBox="0 0 11 11"><path d="M1 1.500h7M4 4h5M4 6.500h5M1 9.500h7M1 4h1M1 6.500h1" stroke="#666" /></svg></button>
					<button class="ml-[5px]" aria-label="草稿"><svg class="size-[11px]" viewBox="0 0 11 11"><path d="M1 1.500h9M1 4.500h9M1 7h9M1 9.500h9" stroke="#666" stroke-width="1.300" /></svg></button>
					<span class="ml-[11px] w-[28px]">90%</span>
					<button aria-label="缩小"><svg class="size-[14px]" viewBox="0 0 14 14"><circle cx="7" cy="7" r="6" fill="#fff" stroke="#777" /><path d="M4 7h6" stroke="#444" stroke-width="1.500" /></svg></button>
					<input
						type="range"
						aria-label="显示比例"
						value="45"
						class="h-[12px] w-[86px] appearance-none bg-[linear-gradient(#9da2aa,#9da2aa)] bg-[length:100%_1px] bg-center bg-no-repeat [&::-webkit-slider-thumb]:h-[11px] [&::-webkit-slider-thumb]:w-[8px] [&::-webkit-slider-thumb]:appearance-none [&::-webkit-slider-thumb]:rounded-b-[4px] [&::-webkit-slider-thumb]:border [&::-webkit-slider-thumb]:border-[#777] [&::-webkit-slider-thumb]:bg-[#f4f4f4]"
					/>
					<button aria-label="放大"><svg class="size-[14px]" viewBox="0 0 14 14"><circle cx="7" cy="7" r="6" fill="#fff" stroke="#777" /><path d="M4 7h6M7 4v6" stroke="#444" stroke-width="1.500" /></svg></button>
					<svg class="mt-[6px] ml-[7px] size-[10px]" viewBox="0 0 10 10"><path d="M7 1h2v2H7zM4 4h2v2H4zM7 4h2v2H7zM1 7h2v2H1zM4 7h2v2H4zM7 7h2v2H7z" fill="#8f959e" /></svg>
				</div>
			</footer>
		</div>

		<!-- Watermark -->
		<div class="absolute top-[516px] right-[54px] w-[178px] text-white/75 [filter:drop-shadow(0_0_1px_rgba(0,0,0,0.35))]">
			<div class="flex h-[60px] items-end whitespace-nowrap">
				<span class="text-[40px] leading-[40px] font-bold">Bai</span>
				<span class="relative h-[60px] w-[52px] shrink-0">
					<svg class="size-full" viewBox="0 0 52 60" fill="currentColor">
						<ellipse cx="6.500" cy="23" rx="6.500" ry="8.500" /><ellipse cx="19" cy="11" rx="6.500" ry="9" /><ellipse cx="35" cy="12" rx="6.500" ry="9" /><ellipse cx="45" cy="27" rx="6.500" ry="8.500" />
						<path d="M26 25c7 0 9 7 14 12 6 5 9 10 6 16-3 6-11 5-20 4-9 1-17 2-20-4-3-6 0-11 6-16 5-5 7-12 14-12z" />
					</svg>
					<span class="absolute inset-x-0 bottom-[4px] text-center text-[24px] leading-[26px] font-bold text-[#b4b7bb]">du</span>
				</span>
				<span class="text-[30px] leading-[36px] font-bold">经验</span>
			</div>
			<div class="text-[21px] leading-[26px]">jingyan.baidu.com</div>
		</div>

		<!-- Callouts -->
		<svg class="pointer-events-none absolute top-0 left-0 h-[400px] w-[300px]" viewBox="0 0 300 400" fill="none" stroke="#f00" stroke-width="2">
			<rect x="113.500" y="41" width="56" height="96" />
			<rect x="183" y="118.500" width="72" height="27" />
			<path d="M194 379L154 128" stroke-width="2.500" />
			<path d="M151 118l8 14-10 2z" fill="#f00" stroke="none" />
		</svg>

		<script>
			// Horizontal ruler
			const numberCell = n => `<span class="w-[10px] text-center">${n}</span>`
			document.getElementById('rulerLeft').innerHTML = [8, 6, 4, 2].map(numberCell).join('')
			document.getElementById('rulerRight').innerHTML = [42, 44, 46, 48].map(numberCell).join('')

			let bodyCells = ''
			for (let n = 2; n <= 38; n += 2) {
				bodyCells += `<div class="flex flex-1 flex-col items-center"><span>${n}</span><span class="mt-[2px] h-[2px] w-px shrink-0 bg-[#555]"></span></div>`
			}
			document.getElementById('rulerBody').innerHTML = bodyCells

			// Vertical ruler
			const tick = '<span class="h-px w-[4px] shrink-0 bg-[#666]"></span>'
			const verticalNumber = n =>
				`<span class="flex h-[15px] shrink-0 items-center"><span class="[writing-mode:sideways-lr]">${n}</span></span>`
			const verticalCell = n =>
				`<div class="flex h-[32px] shrink-0 flex-col items-center justify-center">${tick}${verticalNumber(n)}${tick}</div>`
			const [marginPart, bodyPart] = document.getElementById('verticalRuler').children
			marginPart.innerHTML =
				`<div class="flex h-[26px] shrink-0 flex-col items-center pt-[2px]">${verticalNumber(4)}${tick}</div>` +
				verticalCell(2) +
				`<div class="h-[7px] shrink-0"></div>${tick}`
			let cells = tick + '<div class="h-[7px] shrink-0"></div>'
			for (let n = 2; n <= 20; n += 2) cells += verticalCell(n)
			bodyPart.innerHTML = cells + `<div class="h-[7px] shrink-0"></div>${tick}`
		</script>
	</body>
</html>
